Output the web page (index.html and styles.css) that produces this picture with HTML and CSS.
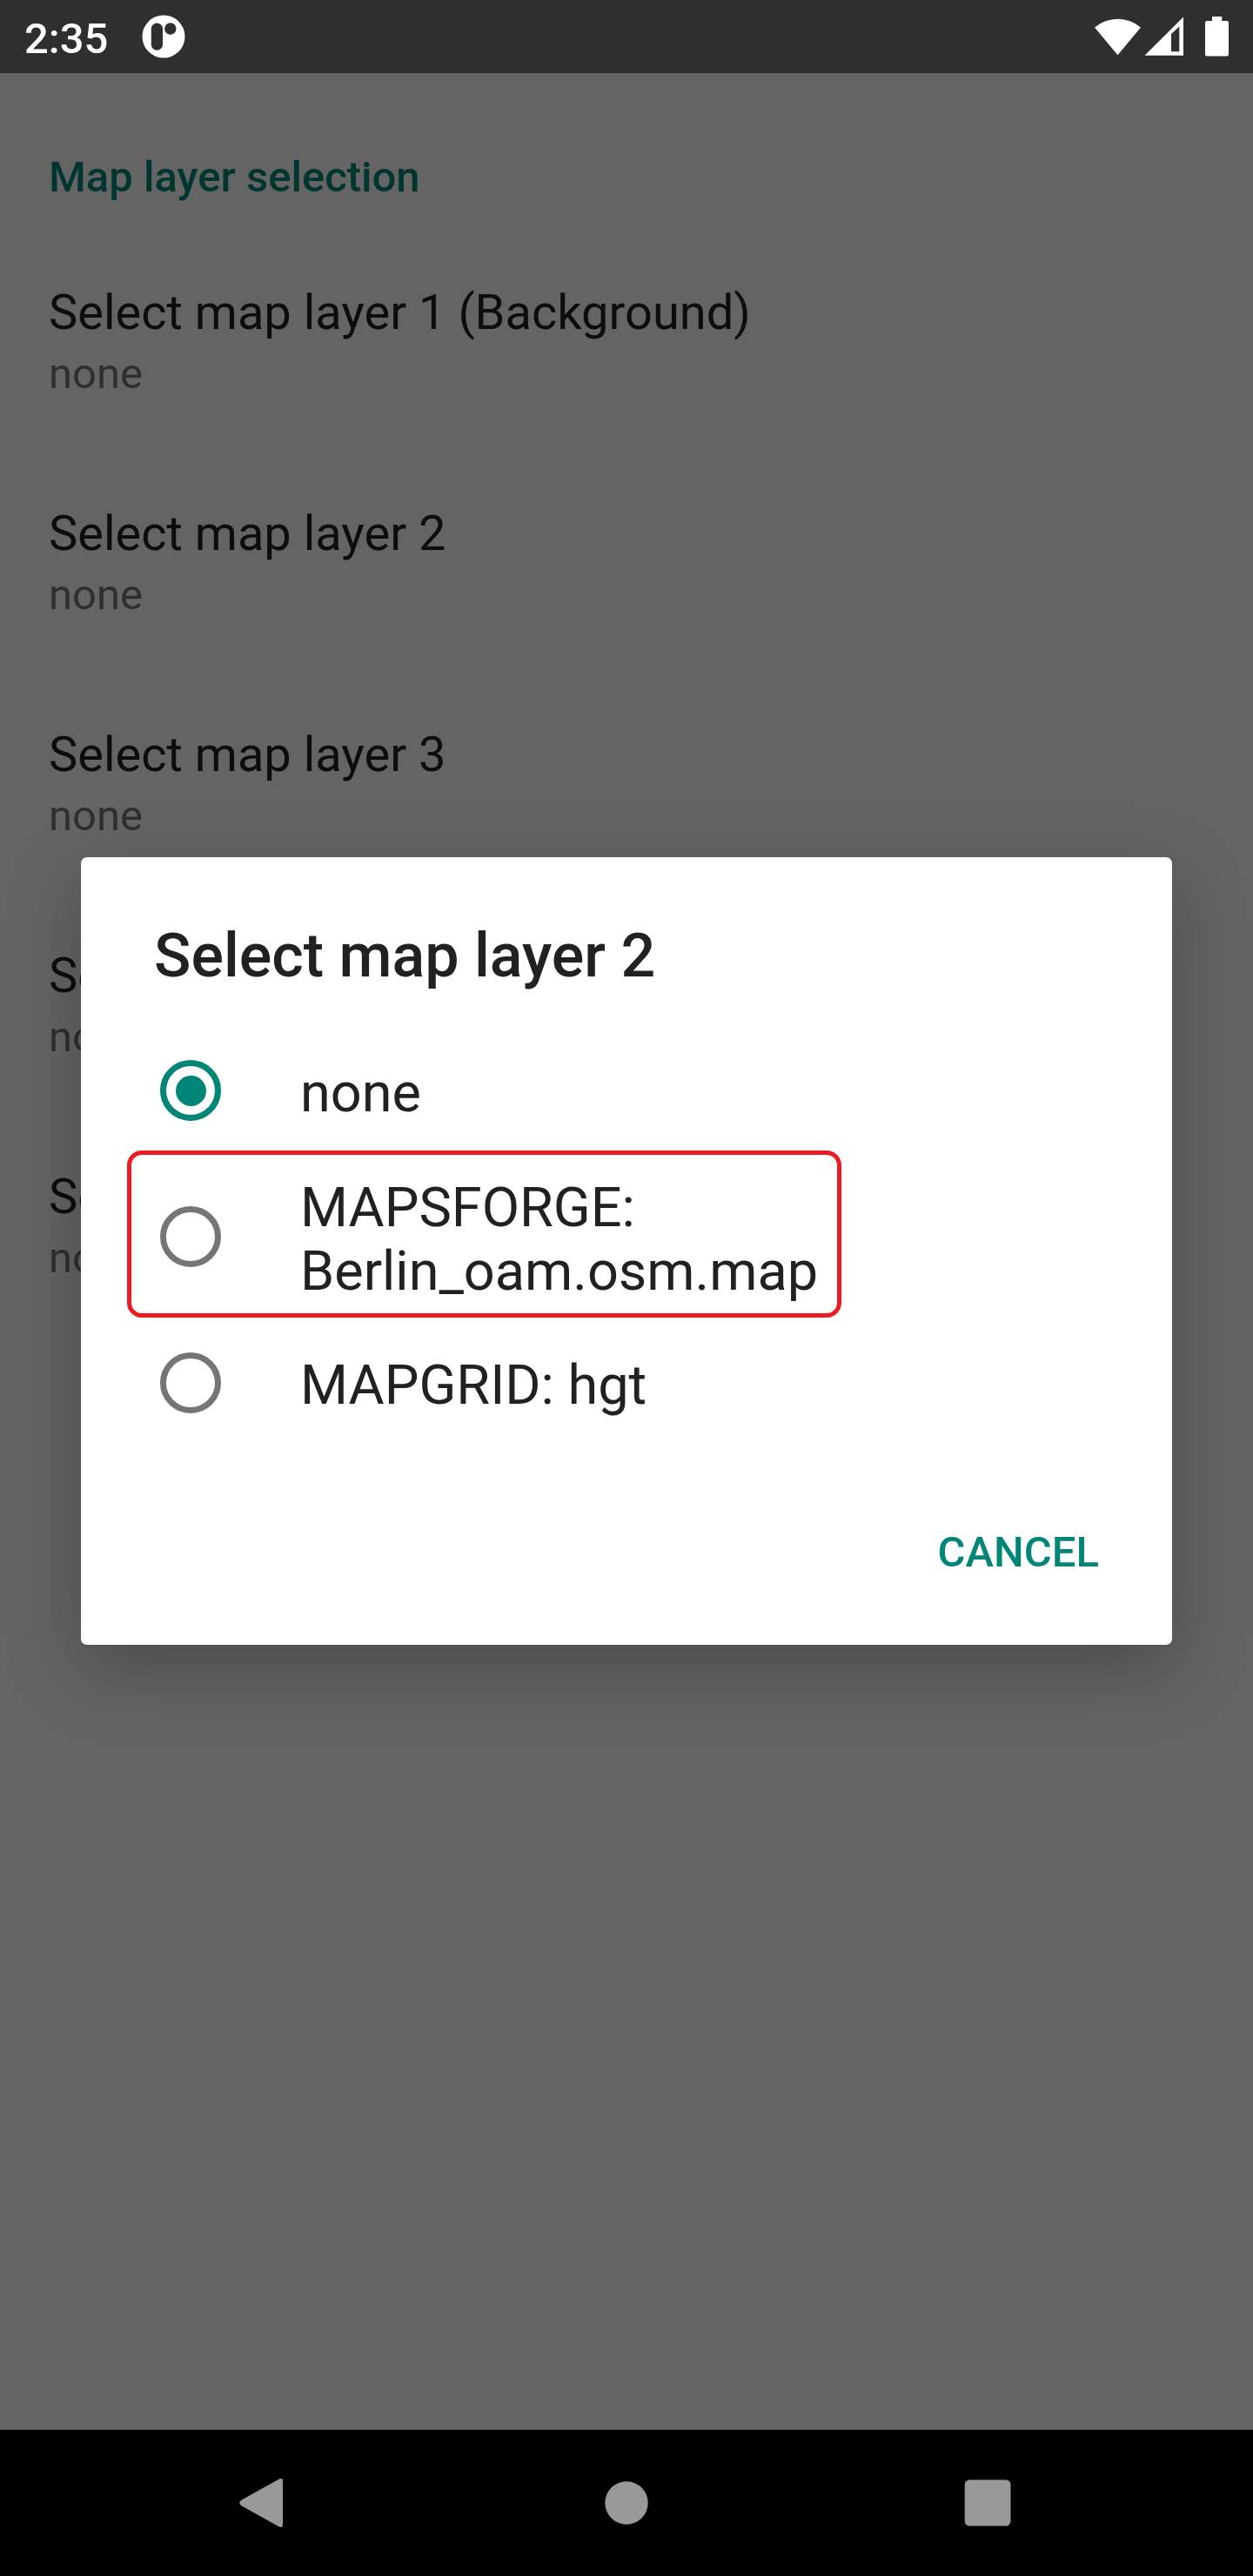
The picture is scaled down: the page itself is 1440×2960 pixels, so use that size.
FILE: index.html
```html
<!DOCTYPE html>
<html lang="en">
<head>
<meta charset="utf-8">
<title>Map layer selection</title>
<link rel="stylesheet" href="styles.css">
</head>
<body>
<div class="screen">
  <header class="status-bar">
    <span class="clock">2:35</span>
    <svg class="app-icon" width="50" height="50" viewBox="0 0 50 50">
      <circle cx="25" cy="25" r="24.5" fill="#fff"/>
      <rect x="10.8" y="9.5" width="13.2" height="31.3" rx="6.6" fill="#2f2f2f"/>
      <circle cx="32.8" cy="16" r="6.7" fill="#2f2f2f"/>
    </svg>
    <svg class="system-icons" width="160" height="84" viewBox="0 0 160 84" fill="#fff">
      <path d="M4.5 63.3 31 31.5A40.5 40.5 0 0 0-22 31.5Z"/>
      <path fill-rule="evenodd" d="M35.5 63.7 80 19.5V63.7ZM66 39V59.3H75.3V30.5Z"/>
      <path d="M113 19H124.200V24H130A2 2 0 0 1 132 26V62.500A2 2 0 0 1 130 64.500H107A2 2 0 0 1 105 62.500V26A2 2 0 0 1 107 24H113Z"/>
    </svg>
  </header>

  <main class="settings">
    <h2 class="section-title">Map layer selection</h2>
    <div class="setting"><div class="name">Select map layer 1 (Background)</div><div class="value">none</div></div>
    <div class="setting"><div class="name">Select map layer 2</div><div class="value">none</div></div>
    <div class="setting"><div class="name">Select map layer 3</div><div class="value">none</div></div>
    <div class="setting"><div class="name">Select map layer 4</div><div class="value">none</div></div>
    <div class="setting"><div class="name">Select map layer 5</div><div class="value">none</div></div>
  </main>

  <nav class="nav-bar">
    <svg width="1440" height="168" viewBox="0 0 1440 168" fill="#999">
      <path d="M277 81 320.500 56.800Q325 54.500 325 59.500V108.500Q325 113.500 320.500 111.200L277 87Q273.500 84 277 81Z"/>
      <circle cx="720" cy="84" r="24.700"/>
      <rect x="1108.700" y="57.500" width="52.800" height="53" rx="5.500"/>
    </svg>
  </nav>

  <div class="dialog" role="dialog">
    <h1 class="dialog-title">Select map layer 2</h1>
    <div class="options">
      <div class="option"><span class="radio checked"></span><span class="label">none</span></div>
      <div class="option"><span class="radio"></span><span class="label">MAPSFORGE: Berlin_oam.osm.map</span></div>
      <div class="option"><span class="radio"></span><span class="label">MAPGRID: hgt</span></div>
    </div>
    <div class="actions"><span class="cancel">CANCEL</span></div>
    <div class="highlight"></div>
  </div>
</div>
</body>
</html>
```
FILE: styles.css
```css
* { box-sizing: border-box; }

body {
  margin: 0;
  font-family: Roboto, sans-serif;
  background: #646464;
}

.screen {
  position: relative;
  display: flex;
  flex-direction: column;
  width: 1440px;
  height: 2960px;
  overflow: hidden;
}

.status-bar {
  display: flex;
  align-items: center;
  height: 84px;
  padding-left: 28px;
  background: #2f2f2f;
  color: #fff;
}

.clock {
  width: 135px;
  font-size: 49px;
  font-weight: 500;
  line-height: 58px;
  margin-top: 6px;
}

.system-icons {
  margin-left: auto;
  overflow: visible;
}

.settings {
  flex: 1;
  padding: 91px 56px 0;
}

.section-title {
  margin: 0 0 32px;
  font-size: 49px;
  font-weight: 500;
  line-height: 58px;
  color: #003530;
}

.setting {
  display: flex;
  flex-direction: column;
  gap: 9px;
  height: 254px;
  padding: 61px 0 60px;
}

.name {
  font-size: 56px;
  line-height: 66px;
  color: #0d0d0d;
}

.value {
  font-size: 49px;
  line-height: 58px;
  color: #2f2f2f;
}

.nav-bar {
  height: 168px;
  background: #000;
}

.nav-bar svg { display: block; }

.dialog {
  position: absolute;
  left: 93px;
  top: 985px;
  width: 1254px;
  height: 905px;
  padding: 72px 84px 0;
  border-radius: 7px;
  background: #fff;
  box-shadow: 0 28px 84px rgba(0, 0, 0, 0.25);
}

.dialog-title {
  margin: 0 0 30px;
  font-size: 70px;
  font-weight: 500;
  line-height: 82px;
  color: #212121;
}

.option {
  display: flex;
  align-items: center;
  gap: 91px;
  height: 168px;
  padding-left: 7px;
}

.radio {
  display: flex;
  flex: none;
  align-items: center;
  justify-content: center;
  width: 70px;
  height: 70px;
  border: 7px solid #757575;
  border-radius: 50%;
}

.radio.checked { border-color: #008577; }

.radio.checked::after {
  content: "";
  width: 35px;
  height: 35px;
  border-radius: 50%;
  background: #008577;
}

.label {
  padding-top: 6px;
  font-size: 63px;
  line-height: 73.500px;
  color: #212121;
}

.actions {
  display: flex;
  justify-content: flex-end;
  padding-top: 82px;
}

.cancel {
  font-size: 49px;
  font-weight: 500;
  line-height: 58px;
  color: #008577;
}

.highlight {
  position: absolute;
  left: 53px;
  top: 337px;
  width: 821px;
  height: 192px;
  border: 5px solid #ed1c24;
  border-radius: 17px;
}
```
